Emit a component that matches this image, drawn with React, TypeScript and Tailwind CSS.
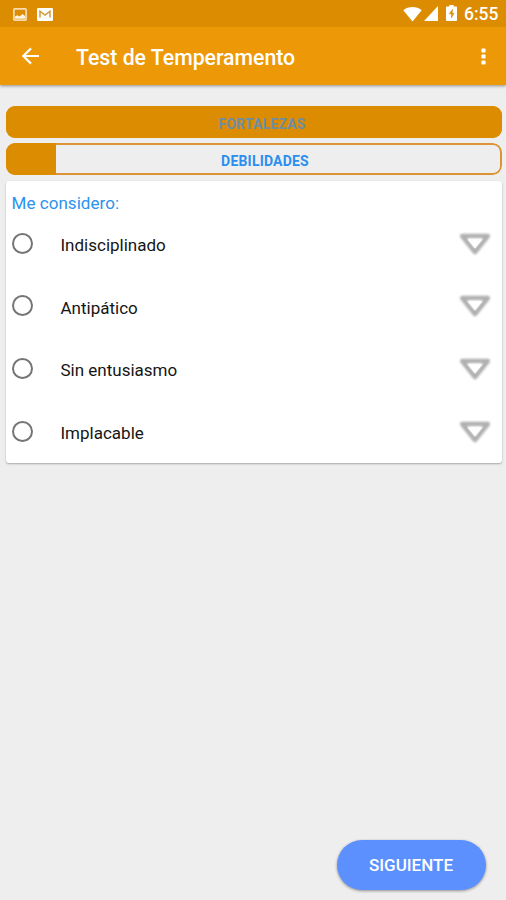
import { useState } from 'react';

const OPTIONS = ['Indisciplinado', 'Antipático', 'Sin entusiasmo', 'Implacable'];

function StatusBar() {
  return (
    <div className="relative z-10 flex h-[27px] items-center bg-[#dc8c00] text-white">
      <svg className="ml-[13px] mt-px h-[13px] w-[14px]" viewBox="0 0 14 13">
        <rect x="0.9" y="0.9" width="12.2" height="11.2" rx="0.8" fill="none" stroke="#f6dcae" strokeWidth="1.7" />
        <path d="M2 10.8V8.6l2.4-1.4 2 1.4L9.6 6 12 8v2.8z" fill="#fdf3e0" />
      </svg>
      <svg className="ml-[10px] mt-px h-[13px] w-[16px]" viewBox="0 0 16 13">
        <rect width="16" height="13" rx="1.2" fill="#fff" />
        <path d="M3 9.5V3.2L8 7l5-3.8V9.5" fill="none" stroke="#d39a3c" strokeWidth="1.5" />
      </svg>
      <div className="ml-auto flex items-center">
        <svg className="h-[16px] w-[19px]" viewBox="0 0 19 16">
          <path d="M0.3 4.3C5.5-.1 13.5-.1 18.7 4.3L9.5 15.5z" fill="#fff" />
        </svg>
        <svg className="ml-[2px] h-[15px] w-[14px]" viewBox="0 0 14 15">
          <path d="M14 0v15H0z" fill="#fff" />
        </svg>
        <svg className="-mt-px ml-[8px] h-[16px] w-[11px]" viewBox="0 0 11 16">
          <path d="M3.3 0h4.4v1.5h2.5q.8 0 .8.8v12.9q0 .8-.8.8H.8q-.8 0-.8-.8V2.3q0-.8.8-.8h2.5z" fill="#fff" />
          <path d="M6.6 4.3 3.2 8.8h2.2v4.2L8 8.2H6.2z" fill="#dc8c00" stroke="#dc8c00" strokeWidth="0.5" />
        </svg>
        <span className="ml-[7px] mr-[7px] w-[35px] whitespace-nowrap pt-[2px] text-[17.5px] font-medium leading-none">6:55</span>
      </div>
    </div>
  );
}

function AppBar() {
  return (
    <header className="relative flex h-[58px] items-center bg-[#ec9807] text-white shadow-[0_1px_3px_rgba(0,0,0,0.4)]">
      <button aria-label="Volver" className="ml-[21px]">
        <svg className="h-[18px] w-[19px]" viewBox="0 0 19 18" fill="none" stroke="#fff" strokeWidth="2.2">
          <path d="M18 9H2.5M10 1.4 2.3 9l7.7 7.6" />
        </svg>
      </button>
      <h1 className="ml-[36px] pt-[3px] text-[21.25px] font-medium leading-none">Test de Temperamento</h1>
      <button aria-label="Más opciones" className="ml-auto mr-[20px]">
        <svg className="h-[17px] w-[5px]" viewBox="0 0 5 17" fill="#fff">
          <rect x="0.4" y="0.6" width="4.2" height="4" rx="1" />
          <rect x="0.4" y="6.5" width="4.2" height="4" rx="1" />
          <rect x="0.4" y="12.4" width="4.2" height="4" rx="1" />
        </svg>
      </button>
    </header>
  );
}

function SectionProgress({ label, percent }: { label: string; percent: number }) {
  const full = percent >= 100;
  return (
    <div className="relative flex h-8 items-center justify-center overflow-hidden rounded-[9px]">
      {/* the outline sits under the fill so the filled part stays a single colour */}
      <div className={`absolute inset-0 rounded-[9px] ${full ? 'bg-[#dc8c00]' : 'border-2 border-[#dc9437]'}`} />
      <div className="absolute inset-y-0 left-0 bg-[#dc8c00]" style={{ width: `${percent}%` }} />
      <span
        className={`relative text-[14px] font-bold leading-none tracking-[0.2px] ${full ? 'pl-[16px] pt-[4px] text-[#6d8fa6]' : 'pl-[22px] pt-[3px] text-[#2b8ff0]'}`}
      >
        {label}
      </span>
    </div>
  );
}

function DropdownArrow() {
  return (
    <svg className="mt-px h-7 w-9 overflow-visible" viewBox="-2 -2 36 28">
      <defs>
        <filter id="arrow-soft" x="-20%" y="-20%" width="140%" height="140%">
          <feGaussianBlur stdDeviation="0.8" />
        </filter>
      </defs>
      <path
        d="M3.2 4h25.6L16 20z"
        fill="#fff"
        stroke="#b0b0b0"
        strokeWidth="4.6"
        strokeLinejoin="round"
        filter="url(#arrow-soft)"
      />
      <path d="M8.5 7.2h15L16 16.6z" fill="#fff" />
    </svg>
  );
}

export default function App() {
  const [selected, setSelected] = useState<string | null>(null);

  return (
    <div className="flex h-[900px] w-[506px] flex-col bg-[#eeeeee] font-[Roboto,sans-serif]">
      <StatusBar />
      <AppBar />

      <main className="flex flex-1 flex-col pb-[10px] pl-[6px] pr-1 pt-[21px]">
        <div className="flex flex-col gap-[5px]">
          <SectionProgress label="FORTALEZAS" percent={100} />
          <SectionProgress label="DEBILIDADES" percent={10} />
        </div>

        <section className="mt-[6px] h-[282px] rounded-[3px] bg-white shadow-[0_1px_2px_rgba(0,0,0,0.3)]">
          <h2 className="pl-[5.5px] pt-[12px] text-[17px] leading-[20px] tracking-[0.05px] text-[#2b92ee]">Me considero:</h2>
          <div className="-mt-px">
            {OPTIONS.map((option) => (
              <button
                key={option}
                className="flex h-[62.6px] w-full items-center pl-[6px] pr-[9px] text-left"
                onClick={() => setSelected(option)}
              >
                <span className="flex size-[21px] items-center justify-center rounded-full border-2 border-[#757575]">
                  {selected === option && <span className="size-[11px] rounded-full bg-[#dc8c00]" />}
                </span>
                <span className="ml-[27.5px] flex-1 pt-1 text-[17px] leading-5 text-[#151515]">{option}</span>
                <DropdownArrow />
              </button>
            ))}
          </div>
        </section>

        <button className="mr-4 mt-auto h-[50px] w-[149px] self-end rounded-full bg-[#5c90ff] pr-px pt-px text-[17px] font-medium text-white shadow-[0_1px_3px_rgba(0,0,0,0.4)]">
          SIGUIENTE
        </button>
      </main>
    </div>
  );
}
